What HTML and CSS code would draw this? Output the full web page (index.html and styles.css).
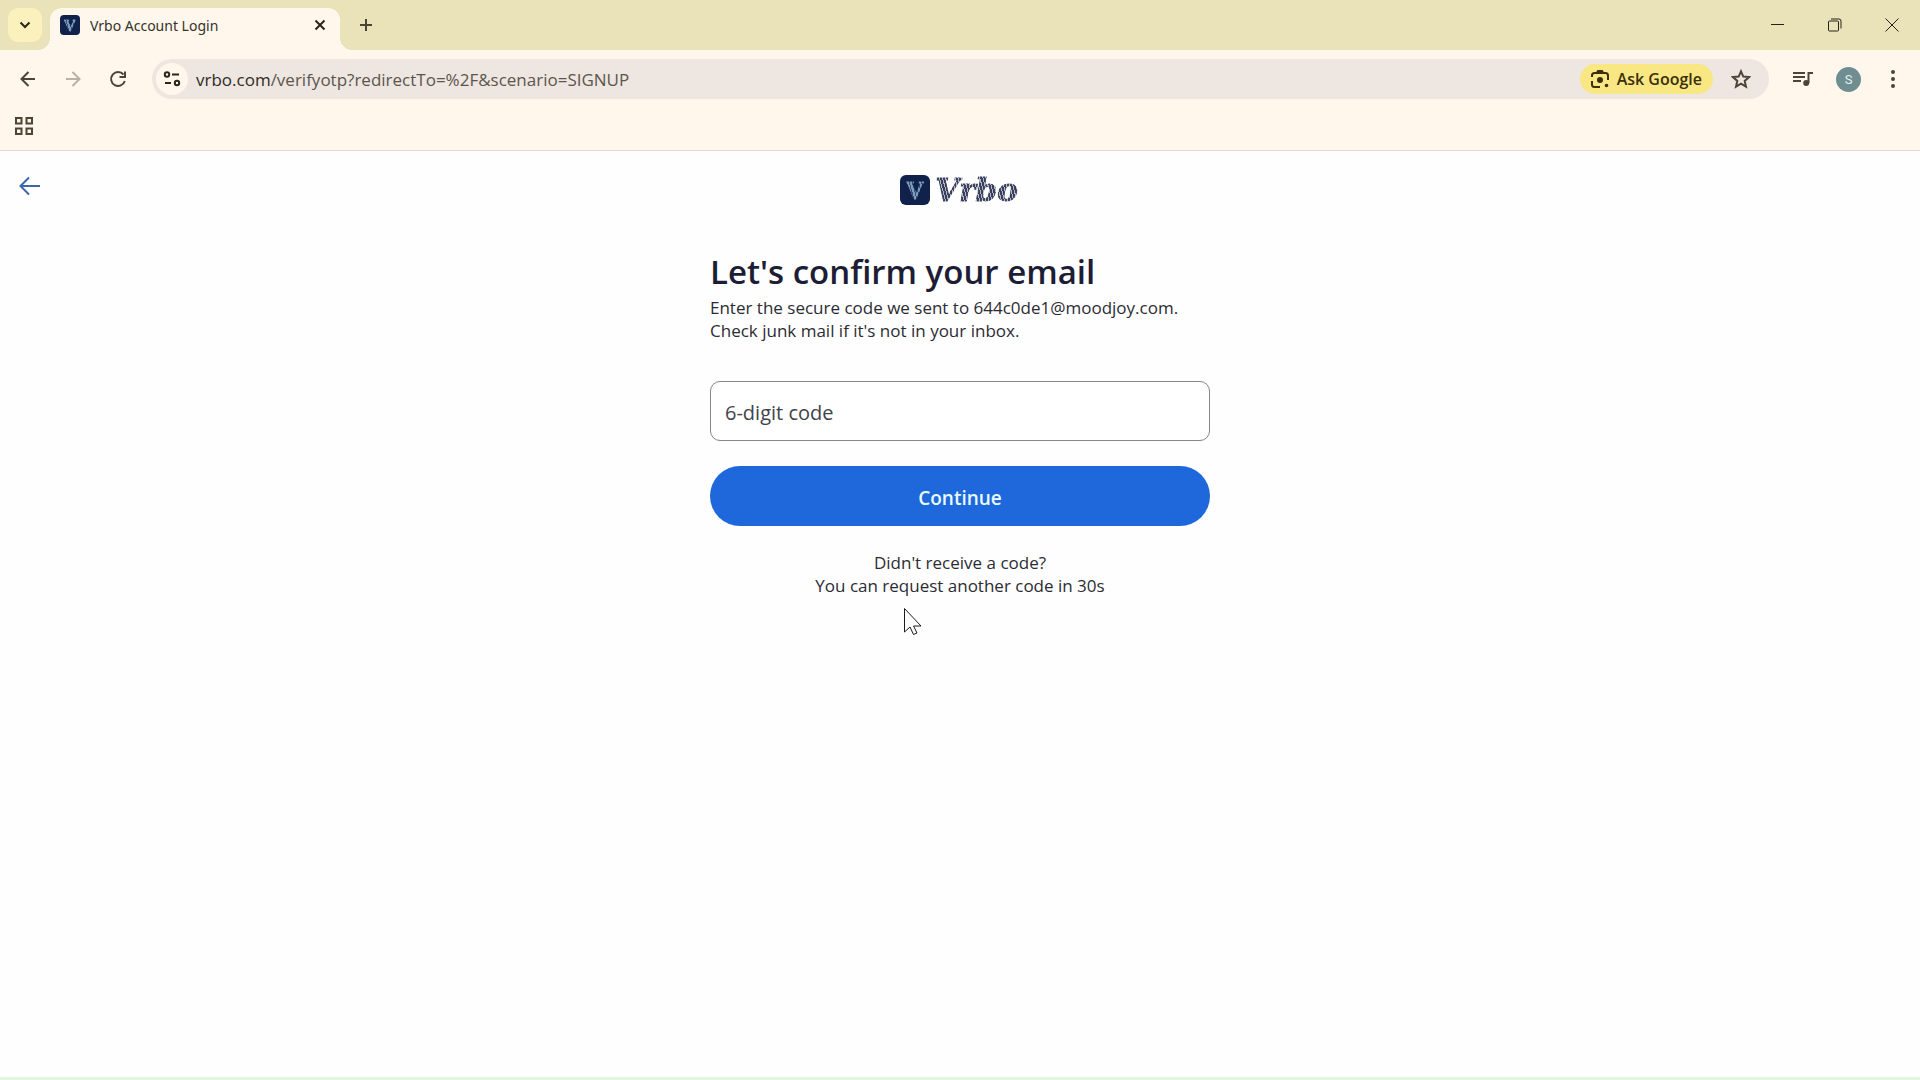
FILE: index.html
```html
<!DOCTYPE html>
<html lang="en">

<head>
    <meta charset="utf-8">
    <title>Vrbo Account Login</title>
    <link rel="stylesheet" href="styles.css">
</head>

<body>

    <header class="browser">
        <div class="tabstrip">
            <button class="tab-search" aria-label="Search tabs">
                <svg width="12" height="8" viewBox="0 0 12 8"><path d="M1.5 1.5 6 6l4.500-4.500" /></svg>
            </button>
            <div class="tab">
                <span class="badge badge-small"><span class="badge-letter">V</span></span>
                <span class="tab-title">Vrbo Account Login</span>
                <button class="icon-btn tab-close" aria-label="Close tab">
                    <svg width="12" height="12" viewBox="0 0 12 12"><path d="M1.500 1.500l9 9M10.500 1.500l-9 9" /></svg>
                </button>
            </div>
            <button class="icon-btn new-tab" aria-label="New tab">
                <svg width="14" height="14" viewBox="0 0 14 14"><path d="M7 1v12M1 7h12" /></svg>
            </button>
            <div class="window-btns">
                <button class="icon-btn" aria-label="Minimize">
                    <svg width="14" height="14" viewBox="0 0 14 14"><path d="M0 6.500h13" /></svg>
                </button>
                <button class="icon-btn" aria-label="Restore">
                    <svg width="14" height="14" viewBox="0 0 14 14"><rect x=".5" y="3" width="10" height="10" rx="1" /><path d="M3 1h8a2 2 0 0 1 2 2v7.500" /></svg>
                </button>
                <button class="icon-btn" aria-label="Close">
                    <svg width="14" height="14" viewBox="0 0 14 14"><path d="M.5 .5l13 13M13.500 .5l-13 13" /></svg>
                </button>
            </div>
        </div>

        <div class="toolbar">
            <div class="nav-btns">
                <button class="icon-btn" aria-label="Back">
                    <svg width="16" height="16" viewBox="0 0 16 16"><path d="M15 8H2M8.500 1 1.500 8l7 7" /></svg>
                </button>
                <button class="icon-btn" aria-label="Forward" disabled>
                    <svg width="16" height="16" viewBox="0 0 16 16"><path d="M1 8h13M7.500 1l7 7-7 7" /></svg>
                </button>
                <button class="icon-btn" aria-label="Reload">
                    <svg width="18" height="18" viewBox="0 0 18 18"><path d="M14.500 4.500A7 7 0 1 0 15.800 11M16 1.500V7h-5.500" /></svg>
                </button>
            </div>
            <div class="omnibox">
                <button class="site-info" aria-label="View site information">
                    <svg width="18" height="18" viewBox="0 0 18 18"><circle cx="4" cy="4.500" r="2.200" /><path d="M9 4.500h7M2 13h6" /><circle cx="14" cy="13" r="2.200" /></svg>
                </button>
                <div class="url"><b>vrbo.com</b>/verifyotp?redirectTo=%2F&amp;scenario=SIGNUP</div>
                <button class="ask">
                    <svg width="20" height="20" viewBox="0 0 20 20"><path d="M2 8V6.500A2.500 2.500 0 0 1 4.500 4h11A2.500 2.500 0 0 1 18 6.500V11M2 12v3.500A2.500 2.500 0 0 0 4.500 18H10M7 3.500 8 2h4l1 1.500" /><circle class="solid" cx="10" cy="11" r="3" /><circle class="solid" cx="16.500" cy="16.500" r="1.800" /></svg>
                    Ask Google
                </button>
                <button class="icon-btn star" aria-label="Bookmark this tab">
                    <svg width="20" height="20" viewBox="0 0 20 20"><path d="M10 2.300l2.300 5.300 5.700.5-4.300 3.800 1.300 5.700-5-3-5 3 1.300-5.700L2 8.100l5.700-.5z" /></svg>
                </button>
            </div>
            <div class="tool-btns">
                <button class="icon-btn" aria-label="Media controls">
                    <svg width="20" height="16" viewBox="0 0 20 16"><path d="M0 2h12M0 6h12M0 10h8M15.500 12V2H20" /><circle class="solid" cx="13.200" cy="12" r="3" /></svg>
                </button>
                <button class="avatar" aria-label="Profile S">S</button>
                <button class="icon-btn" aria-label="Menu">
                    <svg width="18" height="18" viewBox="0 0 18 18"><circle class="solid" cx="9" cy="2" r="2" /><circle class="solid" cx="9" cy="9" r="2" /><circle class="solid" cx="9" cy="16" r="2" /></svg>
                </button>
            </div>
        </div>

        <div class="bookmarks">
            <button class="icon-btn" aria-label="Apps">
                <svg width="18" height="18" viewBox="0 0 18 18"><path d="M1 1h5.500v5.500H1zM11.500 1H17v5.500h-5.500zM1 11.500h5.500V17H1zM11.500 11.500H17V17h-5.500z" /></svg>
            </button>
        </div>
    </header>

    <main class="page">
        <div class="page-top">
            <a class="back" href="#" aria-label="Go back">
                <svg width="22" height="20" viewBox="0 0 22 20"><path d="M21 10H2M10 1.500 1.500 10l8.500 8.500" /></svg>
            </a>
            <a class="logo" href="#">
                <span class="badge"><span class="badge-letter">V</span></span>
                <span class="wordmark">Vrbo</span>
            </a>
        </div>

        <form class="verify">
            <h1>Let's confirm your email</h1>
            <p>Enter the secure code we sent to 644c0de1@moodjoy.com.<br>Check junk mail if it's not in your inbox.</p>
            <input class="code" type="text" inputmode="numeric" maxlength="6" placeholder="6-digit code" aria-label="6-digit code">
            <button class="continue" type="button">Continue</button>
            <div class="resend">
                <p>Didn't receive a code?<br>You can request another code in 30s</p>
                <svg class="pointer" width="18" height="28" viewBox="0 0 18 28"><path d="M.5 .5V24l5.500-5 3.500 7.500 3.500-1.500-3.500-7H17z" /></svg>
            </div>
        </form>
    </main>

</body>

</html>
```
FILE: styles.css
```css
* {
    box-sizing: border-box;
}

html {
    height: 100%;
}

body {
    margin: 0;
    min-height: 100%;
    display: flex;
    flex-direction: column;
    font-family: "Open Sans", "Noto Sans", sans-serif;
    color: #2b2c33;
    background-color: #fefefe;
}

button {
    padding: 0;
    border: 0;
    font: inherit;
    color: inherit;
    background: none;
    cursor: pointer;
}

svg {
    display: block;
    fill: none;
    stroke: currentColor;
    stroke-width: 2;
}

svg .solid {
    fill: currentColor;
    stroke: none;
}

/* Browser frame */

.browser {
    color: #4b4536;
    background-color: #fff7eb;
    border-bottom: 1px solid #e2dcd4;
}

.tabstrip {
    height: 50px;
    padding: 8px 0 0 8px;
    display: flex;
    background-color: #eae2b9;
}

.tab-search {
    width: 34px;
    height: 34px;
    margin-right: 8px;
    display: grid;
    place-items: center;
    border-radius: 10px;
    color: #2a2618;
    background-color: #faf1bd;
}

.icon-btn {
    display: grid;
    place-items: center;
}

.tab {
    position: relative;
    width: 290px;
    padding: 0 10px 8px;
    display: flex;
    align-items: center;
    gap: 10px;
    border-radius: 12px 12px 0 0;
    background-color: #fff7eb;
}

/* flared feet of the active tab */
.tab::before,
.tab::after {
    content: "";
    position: absolute;
    bottom: 0;
    width: 12px;
    height: 12px;
}

.tab::before {
    right: 100%;
    background: radial-gradient(circle at 0 0, transparent 12px, #fff7eb 12px);
}

.tab::after {
    left: 100%;
    background: radial-gradient(circle at 100% 0, transparent 12px, #fff7eb 12px);
}

.tab-title {
    flex: 1;
    font-family: "Noto Sans", sans-serif;
    font-size: 14px;
    color: #35322b;
}

.tab-close {
    width: 20px;
    height: 20px;
    color: #2a2618;
}

.new-tab {
    width: 34px;
    height: 34px;
    margin-left: 9px;
}

.window-btns {
    margin-left: auto;
    display: flex;
    height: 34px;
    color: #25221a;
}

.window-btns .icon-btn {
    width: 57px;
}

.window-btns svg {
    stroke-width: 1;
}

.toolbar {
    height: 58px;
    padding: 9px 18px 9px 14px;
    display: flex;
    align-items: center;
}

.nav-btns {
    display: flex;
    gap: 17px;
    margin-right: 20px;
}

.nav-btns .icon-btn {
    width: 28px;
    height: 28px;
}

.icon-btn:disabled {
    color: #b8b1a6;
}

.omnibox {
    flex: 1;
    height: 40px;
    padding: 0 18px 0 4px;
    display: flex;
    align-items: center;
    border-radius: 20px;
    background-color: #eee6e1;
}

.site-info {
    width: 32px;
    height: 32px;
    display: grid;
    place-items: center;
    border-radius: 50%;
    color: #2a2618;
    background-color: #fff7eb;
}

.url {
    flex: 1;
    margin-left: 8px;
    font-size: 17px;
    color: #5c554c;
}

.url b {
    font-weight: 400;
    color: #2f2b25;
}

.ask {
    height: 30px;
    padding: 0 11px 0 10px;
    display: flex;
    align-items: center;
    gap: 7px;
    border-radius: 15px;
    font-size: 16px;
    font-weight: 600;
    color: #3b2f0b;
    background-color: #f8e783;
}

.star {
    margin-left: 18px;
}

.tool-btns {
    display: flex;
    align-items: center;
    gap: 23px;
    margin-left: 24px;
}

.avatar {
    width: 25px;
    height: 25px;
    border-radius: 50%;
    font-family: Roboto, sans-serif;
    font-size: 13px;
    color: #e4f2f2;
    background-color: #708d92;
}

.bookmarks {
    height: 42px;
    padding: 9px 15px;
}

/* Page */

.page {
    flex: 1;
    border-bottom: 3px solid #dff8dc;
}

.page-top {
    padding: 22px 19px 0;
    display: grid;
    grid-template-columns: 1fr auto 1fr;
    align-items: start;
}

.back {
    justify-self: start;
    padding: 3px 0;
    color: #3c66ab;
}

.logo {
    display: flex;
    align-items: center;
    gap: 5px;
    height: 34px;
    text-decoration: none;
}

.badge {
    width: 30px;
    height: 30px;
    display: grid;
    place-items: center;
    border-radius: 6px;
    font-size: 25px;
    background-color: #10214b;
}

.badge-small {
    width: 20px;
    height: 20px;
    border-radius: 4px;
    font-size: 17px;
}

/* striped lettering */
.badge-letter,
.wordmark {
    font-family: "DejaVu Serif", serif;
    font-weight: 700;
    line-height: 1;
    color: transparent;
    background-clip: text;
    -webkit-background-clip: text;
    -webkit-text-stroke: 1px transparent;
}

.badge-letter {
    font-family: "Liberation Serif", serif;
    background-image: repeating-linear-gradient(75deg, #7e9bba 0 2px, #38527c 2px 3px);
}

.wordmark {
    padding-right: 2px;
    font-size: 31px;
    font-style: italic;
    background-image: repeating-linear-gradient(75deg, #3a405c 0 2px, #b3b7c6 2px 3px);
}

.verify {
    width: 500px;
    max-width: 100%;
    margin: 41px auto 0;
}

.verify h1 {
    margin: 0;
    font-size: 33px;
    font-weight: 600;
    line-height: 48px;
    color: #1d1d35;
}

.verify p {
    margin: 0;
    font-size: 17px;
    line-height: 23px;
}

.code {
    display: block;
    width: 100%;
    height: 60px;
    margin: 39px 0 25px;
    padding: 2px 14px 0;
    border: 1px solid #85868c;
    border-radius: 10px;
    font: inherit;
    font-size: 20px;
    color: inherit;
    background-color: #fff;
}

.code::placeholder {
    color: #42434a;
    opacity: 1;
}

.continue {
    width: 100%;
    height: 60px;
    padding-top: 4px;
    border-radius: 30px;
    font-size: 19px;
    font-weight: 600;
    color: #e8fbff;
    background-color: #1f68db;
}

.resend {
    position: relative;
    margin-top: 25px;
    text-align: center;
}

/* mouse pointer lies over the page */
.pointer {
    position: absolute;
    left: 194px;
    top: 57px;
    fill: #fff;
    stroke: #1c1c1c;
    stroke-width: 1;
}
```
